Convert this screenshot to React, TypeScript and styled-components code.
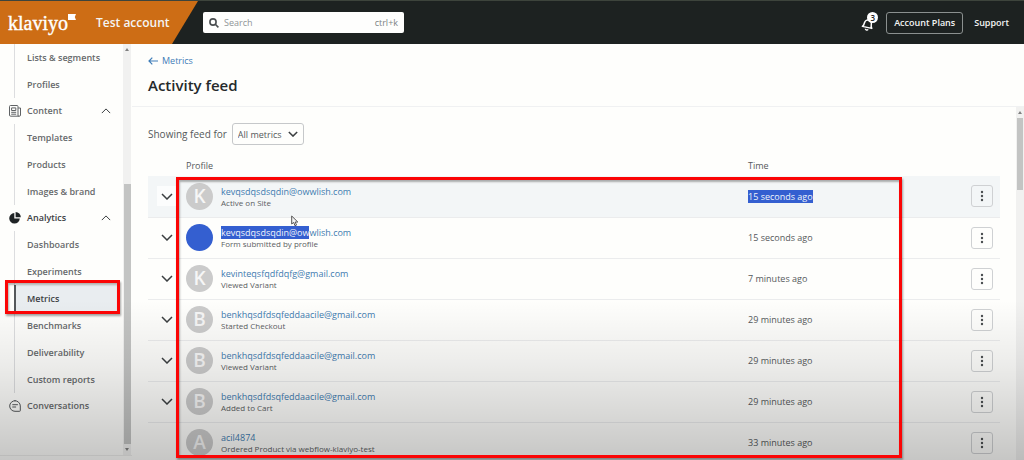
import React from 'react';
import styled, { createGlobalStyle, css } from 'styled-components';

const GlobalStyle = createGlobalStyle`
  *, *::before, *::after { box-sizing: border-box; }
  body {
    margin: 0;
    overflow: hidden;
    font-family: "Open Sans", "Noto Sans", sans-serif;
    font-size: 9px;
    color: #55595b;
    background: #fefefc;
  }
  button, input, select { font: inherit; color: inherit; }
  ul { margin: 0; padding: 0; list-style: none; }
  a { color: inherit; text-decoration: none; }
`;

const Shell = styled.div`
  position: relative;
  display: flex;
  flex-direction: column;
  height: 100vh;
`;

/* ---------- top bar ---------- */

const TopBar = styled.header`
  flex: none;
  display: flex;
  align-items: center;
  height: 44px;
  padding-right: 15px;
  background: #1d2221;
  border-top: 1px solid #3d443c;
  color: #f4f5f4;
  font-weight: 600;
`;

const Brand = styled.div`
  display: flex;
  align-items: center;
  align-self: stretch;
  width: 198px;
  padding-left: 8px;
  background: #cd6d15;
  clip-path: polygon(0 0, 100% 0, 172px 100%, 0 100%);
`;

const Wordmark = styled.a`
  display: flex;
  align-items: flex-start;
  width: 88px;
  font-family: "Liberation Serif", serif;
  font-size: 20px;
  line-height: 24px;
  font-weight: 400;
  color: #fff;
  -webkit-text-stroke: 0.4px #fff;

  svg { margin-top: 3px; }
`;

const AccountName = styled.span`
  font-size: 12px;
  white-space: nowrap;
`;

const SearchBox = styled.label`
  display: flex;
  align-items: center;
  gap: 5px;
  width: 201px;
  height: 21px;
  margin-left: 5px;
  padding: 0 6px;
  border-radius: 2px;
  background: #fefefd;
  color: #7d8385;
  font-weight: 400;

  input {
    flex: 1;
    min-width: 0;
    padding: 0;
    border: 0;
    outline: 0;
    background: none;
  }
  input::placeholder { color: #8f9598; opacity: 1; }
`;

const TopActions = styled.div`
  display: flex;
  align-items: center;
  margin-left: auto;
`;

const BellButton = styled.button`
  position: relative;
  width: 17px;
  height: 22px;
  margin-right: 8px;
  padding: 0;
  border: 0;
  background: none;

  svg { display: block; margin-top: 3px; }
`;

const Count = styled.span`
  position: absolute;
  top: 0;
  right: 0;
  width: 11px;
  height: 11px;
  border-radius: 50%;
  background: #fff;
  color: #1d2221;
  font-size: 8px;
  line-height: 11px;
  text-align: center;
`;

const PlansButton = styled.button`
  width: 77px;
  height: 22px;
  margin-right: 11px;
  padding: 0;
  border: 1px solid #8b908f;
  border-radius: 3px;
  background: none;
  white-space: nowrap;
`;

/* ---------- sidebar ---------- */

const Body = styled.div`
  flex: 1;
  display: flex;
  min-height: 0;
`;

const Sidebar = styled.aside`
  flex: none;
  display: flex;
  width: 132px;
  margin-bottom: 4px;
  border-bottom: 1px solid #eeeeec;
`;

const Nav = styled.nav`
  width: 123px;
  font-weight: 600;
  color: #66696b;
  line-height: 14px;
`;

const SubList = styled.ul`
  margin: 0 4px 0 14px;
`;

const SubItem = styled.li<{ $active?: boolean }>`
  position: relative;
  height: 27px;
  border-left: 1px solid #dcdddf;

  a {
    display: flex;
    align-items: center;
    height: 100%;
    padding-left: 12px;
    white-space: nowrap;
  }

  ${p => p.$active && css`
    border-left: 2px solid #55585b;
    background: #e9edf0;
    color: #3c4043;
    a { padding-left: 11px; }
  `}
`;

const GroupButton = styled.button<{ $strong?: boolean }>`
  display: flex;
  align-items: center;
  width: 100%;
  height: 26px;
  padding: 0 12px 0 9px;
  border: 0;
  background: none;
  text-align: left;
  color: ${p => (p.$strong ? '#3c4043' : 'inherit')};

  span { flex: 1; margin-left: 6px; }
`;

const Scrollbar = styled.div`
  display: flex;
  flex-direction: column;
  align-items: center;
  width: 8px;
  background: #f1f1f0;
`;

const ScrollArrow = styled.i<{ $down?: boolean }>`
  margin: 4px 0;
  border: 2px solid transparent;
  border-top-width: 0;
  border-bottom: 3px solid #808080;
  transform: ${p => (p.$down ? 'rotate(180deg)' : 'none')};
`;

const SideThumb = styled.div`
  flex: 1;
  width: 7px;
  margin-top: 129px;
  background: #c3c4c3;
`;

const MainThumb = styled.div`
  width: 6px;
  height: 72px;
  background: #c3c4c3;
`;

/* ---------- main ---------- */

const Main = styled.main`
  flex: 1;
  display: flex;
  flex-direction: column;
  min-width: 0;
`;

const PageHead = styled.div`
  flex: none;
  height: 63px;
  padding: 10px 16px 0;
  border-bottom: 1px solid #f0f1f2;
`;

const BackLink = styled.a`
  display: flex;
  align-items: center;
  gap: 4px;
  line-height: 14px;
  color: #3e7db8;
`;

const Title = styled.h1`
  margin: 6px 0 0;
  font-size: 15px;
  line-height: 22px;
  font-weight: 600;
  color: #25292b;
`;

const Scroller = styled.div`
  flex: 1;
  display: flex;
  min-height: 0;
  overflow: hidden;
`;

const Feed = styled.section`
  flex: 1;
  padding: 16px 16px 0 16px;
`;

const Filter = styled.label`
  display: flex;
  align-items: center;
  gap: 5px;
  font-size: 10px;
`;

const SelectWrap = styled.span`
  display: grid;
  align-items: center;

  select, svg { grid-area: 1 / 1; }
  svg { justify-self: end; margin-right: 6px; pointer-events: none; }
  select {
    appearance: none;
    width: 72px;
    height: 22px;
    padding: 0 5px;
    border: 1px solid #c6c8ca;
    border-radius: 3px;
    background: none;
    font-size: 9px;
  }
`;

const TableWrap = styled.div`
  position: relative;
  margin-top: 9px;
`;

const FeedTable = styled.table`
  width: 100%;
  table-layout: fixed;
  border-collapse: collapse;

  th, td { padding: 0; text-align: left; font-weight: 400; }
  th { height: 22px; }
  th:nth-child(1) { width: 38px; }
  th:nth-child(3) { width: 223px; }
  th:nth-child(4) { width: 29px; }
`;

const Row = styled.tr<{ $hover?: boolean }>`
  height: 41px;
  border-bottom: 1px solid #ebeced;
  background: ${p => (p.$hover ? '#f3f6f7' : 'none')};
`;

const ExpandButton = styled.button<{ $lit?: boolean }>`
  display: grid;
  place-items: center;
  width: 20px;
  height: 20px;
  margin-left: 9px;
  padding: 0;
  border: 0;
  background: ${p => (p.$lit ? '#fcfdfd' : 'none')};
`;

const Profile = styled.div`
  display: flex;
  align-items: center;
  gap: 8px;
`;

const Avatar = styled.span<{ $selected?: boolean }>`
  flex: none;
  width: 27px;
  height: 27px;
  border-radius: 50%;
  background: ${p => (p.$selected ? '#345fd0' : '#cbcbcb')};
  color: #f6f6f6;
  font-size: 19px;
  line-height: 27px;
  font-weight: 600;
  text-align: center;
`;

const Who = styled.div`
  a { display: block; line-height: 13px; color: #3f7cb0; }
  small { display: block; font-size: 8px; line-height: 10px; color: #5c6062; }
`;

const Selected = styled.mark`
  display: inline-block;
  line-height: 13px;
  background: #345fd0;
  color: #f0f4fb;
`;

const MoreButton = styled.button`
  display: grid;
  place-items: center;
  width: 22px;
  height: 22px;
  padding: 0;
  border: 1px solid #cfd1d3;
  border-radius: 3px;
  background: transparent;
`;

/* ---------- overlays ---------- */

const Shade = styled.div`
  position: absolute;
  inset: auto 0 0 0;
  height: 160px;
  background: linear-gradient(rgba(0, 0, 0, 0), rgba(0, 0, 0, 0.07) 40%, rgba(0, 0, 0, 0.22));
  pointer-events: none;
  z-index: 1;
`;

const Highlight = styled.span<{ $inset: string }>`
  position: absolute;
  inset: ${p => p.$inset};
  border: 3px solid #fb0505;
  box-shadow: 1px 2px 2px rgba(0, 0, 0, 0.35), inset 1px 2px 2px rgba(0, 0, 0, 0.3);
  pointer-events: none;
  z-index: 2;
`;

const Pointer = styled.svg`
  position: absolute;
  left: 143px;
  top: 61px;
  z-index: 2;
`;

/* ---------- icons ---------- */

const Chevron = ({ up, size = 12, stroke = 1.5 }: { up?: boolean; size?: number; stroke?: number }) => (
  <svg width={size} height={size / 2 + 1} viewBox="0 0 12 7" fill="none" stroke="#3b3f41" strokeWidth={stroke} aria-hidden>
    <path d={up ? 'M1 6 L6 1 L11 6' : 'M1 1 L6 6 L11 1'} />
  </svg>
);

const ContentIcon = () => (
  <svg width="12" height="12" viewBox="0 0 12 12" fill="none" stroke="#5f6264" aria-hidden>
    <path d="M9 10.5V1.5a1 1 0 0 0-1-1H1.5a1 1 0 0 0-1 1V10a1.2 1.2 0 0 0 1.2 1.2h8.6A1.2 1.2 0 0 0 11.5 10V3H9.2M9 10.5q.2.7 1.2.7" />
    <path d="M2.6 2.9h4.2v2.6H2.6zM2.2 7.3h5M2.2 9.2h5" />
  </svg>
);

const AnalyticsIcon = () => (
  <svg width="12" height="12" viewBox="0 0 12 12" fill="#1f2325" aria-hidden>
    <path d="M5.3 1v5.6h5.5A5.3 5.3 0 1 1 5.3 1z" />
    <path d="M6.6 0a5.3 5.3 0 0 1 5.2 5.3H6.6z" />
  </svg>
);

const ConversationsIcon = () => (
  <svg width="12" height="12" viewBox="0 0 12 12" fill="none" stroke="#55585a" strokeLinecap="round" aria-hidden>
    <path d="M6 .7a5.3 5.3 0 1 0 0 10.6h4.6q.7 0 .7-.7V6A5.300 5.300 0 0 0 6 .7z" />
    <path d="M3.700 4.700h4.800M3.700 7h3" />
  </svg>
);

const MoreIcon = () => (
  <svg width="4" height="12" viewBox="0 0 4 12" fill="#4a4e50" aria-hidden>
    <circle cx="2" cy="2" r="1.2" />
    <circle cx="2" cy="6" r="1.2" />
    <circle cx="2" cy="10" r="1.2" />
  </svg>
);

/* ---------- data ---------- */

const audience = ['Lists & segments', 'Profiles'];
const content = ['Templates', 'Products', 'Images & brand'];
const analytics = ['Dashboards', 'Experiments', 'Metrics', 'Benchmarks', 'Deliverability', 'Custom reports'];

type Entry = { name: string; rest?: string; event: string; time: string };

const entries: Entry[] = [
  { name: 'kevqsdqsdsqdin@owwlish.com', event: 'Active on Site', time: '15 seconds ago' },
  { name: 'kevqsdqsdsqdin@ow', rest: 'wlish.com', event: 'Form submitted by profile', time: '15 seconds ago' },
  { name: 'kevinteqsfqdfdqfg@gmail.com', event: 'Viewed Variant', time: '7 minutes ago' },
  { name: 'benkhqsdfdsqfeddaacile@gmail.com', event: 'Started Checkout', time: '29 minutes ago' },
  { name: 'benkhqsdfdsqfeddaacile@gmail.com', event: 'Viewed Variant', time: '29 minutes ago' },
  { name: 'benkhqsdfdsqfeddaacile@gmail.com', event: 'Added to Cart', time: '29 minutes ago' },
  { name: 'acil4874', event: 'Ordered Product via webflow-klaviyo-test', time: '33 minutes ago' },
];

const Links = ({ items }: { items: string[] }) => (
  <SubList>
    {items.map(item => (
      <SubItem key={item} $active={item === 'Metrics'}>
        <a href="#">{item}</a>
        {item === 'Metrics' && <Highlight $inset="-5px -1px -2px -11px" />}
      </SubItem>
    ))}
  </SubList>
);

export default function App() {
  return (
    <Shell>
      <GlobalStyle />
      <TopBar>
        <Brand>
          <Wordmark href="#">
            klaviyo
            <svg width="8" height="6" viewBox="0 0 8 6" fill="#fff" aria-hidden>
              <path d="M0 0h8L6.8 3 8 6H0z" />
            </svg>
          </Wordmark>
          <AccountName>Test account</AccountName>
        </Brand>
        <SearchBox>
          <svg width="10" height="10" viewBox="0 0 10 10" fill="none" stroke="#4a4e50" strokeWidth="1.6" aria-hidden>
            <circle cx="4" cy="4" r="3.1" />
            <path d="M6.3 6.3 9.4 9.4" />
          </svg>
          <input type="text" placeholder="Search" aria-label="Search" />
          <span>ctrl+k</span>
        </SearchBox>
        <TopActions>
          <BellButton aria-label="Notifications">
            <svg width="14" height="15" viewBox="0 0 14 15" fill="none" stroke="#fff" strokeWidth="1.5" strokeLinejoin="round" aria-hidden>
              <g transform="rotate(12 7 7)">
                <path d="M2 10.5c1.3-1.2 1.3-2.2 1.3-4a3.5 3.5 0 0 1 7 0c0 1.8 0 2.8 1.3 4z" />
                <path d="M5.4 12.2a1.5 1.5 0 0 0 2.8 0" />
              </g>
            </svg>
            <Count>3</Count>
          </BellButton>
          <PlansButton>Account Plans</PlansButton>
          <a href="#">Support</a>
        </TopActions>
      </TopBar>

      <Body>
        <Sidebar>
          <Nav>
            <Links items={audience} />
            <GroupButton><ContentIcon /><span>Content</span><Chevron up size={10} stroke={1.2} /></GroupButton>
            <Links items={content} />
            <GroupButton $strong><AnalyticsIcon /><span>Analytics</span><Chevron up size={10} stroke={1.2} /></GroupButton>
            <Links items={analytics} />
            <GroupButton><ConversationsIcon /><span>Conversations</span></GroupButton>
          </Nav>
          <Scrollbar>
            <ScrollArrow />
            <SideThumb />
            <ScrollArrow $down />
          </Scrollbar>
        </Sidebar>

        <Main>
          <PageHead>
            <BackLink href="#">
              <svg width="10" height="8" viewBox="0 0 10 8" fill="none" stroke="currentColor" strokeWidth="1.2" aria-hidden>
                <path d="M10 4H1M4.3 .7 1 4l3.300 3.300" />
              </svg>
              Metrics
            </BackLink>
            <Title>Activity feed</Title>
          </PageHead>
          <Scroller>
            <Feed>
              <Filter>
                Showing feed for
                <SelectWrap>
                  <select defaultValue="All metrics"><option>All metrics</option></select>
                  <Chevron size={10} stroke={1.8} />
                </SelectWrap>
              </Filter>
              <TableWrap>
                <FeedTable>
                  <thead>
                    <tr><th /><th>Profile</th><th>Time</th><th /></tr>
                  </thead>
                  <tbody>
                    {entries.map((e, i) => (
                      <Row key={i} $hover={i === 0}>
                        <td>
                          {i < 6 && <ExpandButton $lit={i === 0} aria-label="Expand"><Chevron /></ExpandButton>}
                        </td>
                        <td>
                          <Profile>
                            <Avatar $selected={!!e.rest}>{e.rest ? '' : e.name[0].toUpperCase()}</Avatar>
                            <Who>
                              <a href="#">{e.rest ? <><Selected>{e.name}</Selected>{e.rest}</> : e.name}</a>
                              <small>{e.event}</small>
                            </Who>
                          </Profile>
                        </td>
                        <td>{i === 0 ? <Selected>{e.time}</Selected> : e.time}</td>
                        <td><MoreButton aria-label="More"><MoreIcon /></MoreButton></td>
                      </Row>
                    ))}
                  </tbody>
                </FeedTable>
                <Highlight $inset="23px 98px 6px 28px" />
                <Pointer width="8" height="12" viewBox="0 0 8 12" fill="#f4f4f4" stroke="#555" aria-hidden>
                  <path d="M.7 1v8l2-1.6L4 10.800l1.500-.7L4.200 7h2.600z" />
                </Pointer>
              </TableWrap>
            </Feed>
            <Scrollbar>
              <ScrollArrow />
              <MainThumb />
            </Scrollbar>
          </Scroller>
        </Main>
      </Body>
      <Shade />
    </Shell>
  );
}
